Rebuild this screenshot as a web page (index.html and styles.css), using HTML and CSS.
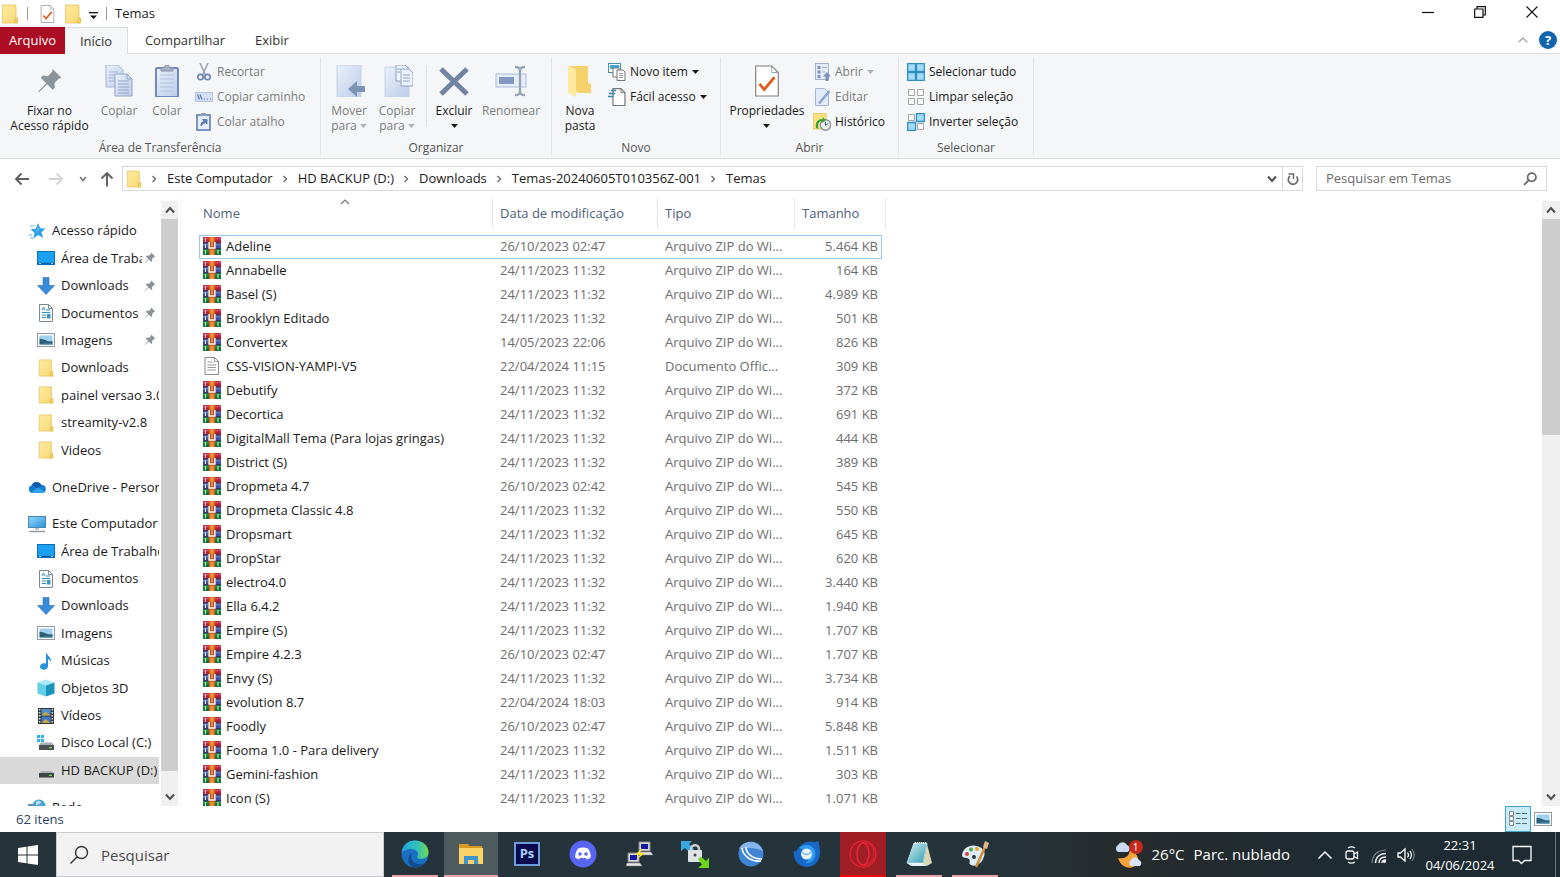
FILE: index.html
```html
<!DOCTYPE html>
<html lang="pt-BR">
<head>
  <meta charset="UTF-8" />
  <meta name="viewport" content="width=device-width, initial-scale=1.0" />
  <title>Temas</title>
  <link rel="stylesheet" href="styles.css">
</head>
<body>
  <svg class="sprite" aria-hidden="true">
    <defs>
      <linearGradient id="gFolder" x1="0" y1="0" x2="1" y2="1"><stop offset="0" stop-color="#ffeaa0" /><stop offset="1" stop-color="#f6d873" /></linearGradient>
      <linearGradient id="gPaper" x1="0" y1="0" x2="1" y2="1"><stop offset="0" stop-color="#e9f0fb" /><stop offset="1" stop-color="#bccde8" /></linearGradient>
      <linearGradient id="gScreen" x1="0" y1="0" x2="1" y2="1"><stop offset="0" stop-color="#8fd6fb" /><stop offset="1" stop-color="#2b93dd" /></linearGradient>
      <linearGradient id="gEdge" x1="0" y1="0" x2="1" y2="0"><stop offset="0" stop-color="#1fa6e0" /><stop offset=".6" stop-color="#35c1b8" /><stop offset="1" stop-color="#6fdc4d" /></linearGradient>
      <linearGradient id="gGlass" x1="0" y1="0" x2="1" y2="1"><stop offset="0" stop-color="#d3f1f5" /><stop offset="1" stop-color="#2f9bb0" /></linearGradient>
    </defs>
    <symbol id="folder" viewBox="0 0 18 20">
      <path d="M1.500 1h13.500v13h1.500v5h-15z" fill="url(#gFolder)" stroke="#e5c25a" stroke-width=".8" />
      <path d="M13.500 19v-4l1.500-1.500 1.500 1.500v4z" fill="#f3cf62" stroke="#dfb84c" stroke-width=".6" />
    </symbol>
    <symbol id="rar" viewBox="0 0 18 18">
      <rect y="0" width="18" height="6" fill="#b3213f" /><rect y="0.500" width="18" height="2" fill="#d5435b" />
      <rect y="6" width="18" height="6" fill="#3f4fa5" /><rect y="6.500" width="18" height="2" fill="#6b72c4" />
      <rect y="12" width="18" height="6" fill="#0f7236" /><rect y="12.500" width="18" height="2" fill="#2c9a4d" />
      <path d="M2.500 1v4M2.500 7v4M2.500 13v4M15 13v4" stroke="#d9e6c8" stroke-width="1" />
      <path d="M0 5.800h18M0 11.800h18" stroke="#2b2440" stroke-width=".8" />
      <rect x="6" width="6" height="18" fill="#d9631b" /><rect x="7.500" width="3" height="18" fill="#f0913c" />
      <path d="M5 5h8v7.500H5z" fill="#a3431f" />
      <path d="M6.200 5v6h5.600V5" fill="none" stroke="#fff" stroke-width="1.500" />
      <path d="M9 5v4.500" stroke="#f2a65c" stroke-width="1.600" />
    </symbol>
    <symbol id="textfile" viewBox="0 0 18 18">
      <path d="M2 .5h9.500l4 4v13H2z" fill="#fff" stroke="#8a8a8a" />
      <path d="M11.500.5v4h4M4.500 5h5M4.500 8h8.500M4.500 10.500h8.500M4.500 13h8.500" fill="none" stroke="#999" />
    </symbol>
    <symbol id="pin" viewBox="0 0 24 24">
      <path d="M14.500 1l8 8-2.500 1-4 4 .5 4-2 2-5-5L1.500 22.500 1 22l7.500-8-5-5 2-2 4.500.500 4-4z" fill="#8b949a" />
    </symbol>
    <symbol id="star" viewBox="0 0 18 18">
      <path d="M10 1l2.200 5.200 5.300.3-4 3.700 1.600 5.800-5-3-4.600 3.500 1-5.800-4-3.500 5.300-.5z" fill="#2f9fe3" />
      <path d="M2 4h4M1 13h3M2 16h3" stroke="#8cd0f5" stroke-width="1.500" />
      <path d="M10 4l1.500 3.500-4 4z" fill="#56b6ef" />
    </symbol>
    <symbol id="desktop" viewBox="0 0 18 18">
      <rect x=".5" y="2.500" width="17" height="13" fill="#1ba1f2" stroke="#0b6fbd" />
      <path d="M1 14.500h16" stroke="#0a5ea6" stroke-width="1.500" /><path d="M2 14.500h2M14 14.500h2" stroke="#9bd9ff" />
    </symbol>
    <symbol id="down" viewBox="0 0 18 18"><path d="M6 0.500h6v8h5.500L9 17.500.5 8.500H6z" fill="#378bd8" stroke="#2a74bb" stroke-width=".6" /></symbol>
    <symbol id="doc" viewBox="0 0 18 18">
      <path d="M2.500.5h9l4 4v13h-13z" fill="#fafcfd" stroke="#7e8a93" /><path d="M11.500.5v4h4" fill="none" stroke="#7e8a93" />
      <path d="M5 6l1.500-3L8 6M9 6h4M5 8.500h8M5 11h4M5 13.500h4" fill="none" stroke="#2d8fb8" /><rect x="10" y="10" width="3.500" height="4.500" fill="#3e94c2" />
    </symbol>
    <symbol id="image" viewBox="0 0 18 18">
      <rect x=".5" y="2.500" width="17" height="13" fill="#fff" stroke="#929ba3" /><rect x="2.500" y="4.500" width="13" height="9" fill="#9ed0ef" />
      <path d="M2.500 8c4-1 8 4 13 2v3.500h-13z" fill="#2f6078" /><path d="M7 12.500h8.500v1H6z" fill="#4d9ac0" />
    </symbol>
    <symbol id="cloud" viewBox="0 0 18 18">
      <path d="M4.500 15a4 4 0 0 1-.8-7.800A5.500 5.500 0 0 1 13.500 7 4 4 0 0 1 14 15z" fill="#1478cf" /><path d="M3.800 7.200A5.500 5.500 0 0 1 13.500 7L9 10z" fill="#0d57a5" /><path d="M3 14.500l7-5 7 4a4 4 0 0 1-3 1.500H4.500z" fill="#2ba4ec" />
    </symbol>
    <symbol id="pc" viewBox="0 0 18 18">
      <rect x=".5" y="1.500" width="17" height="11" fill="url(#gScreen)" stroke="#4b87ad" /><path d="M7 13h4v2H7z" fill="#b9c3ca" /><path d="M1 16.500h16" stroke="#8d989f" stroke-width="1.400" />
    </symbol>
    <symbol id="music" viewBox="0 0 18 18"><path d="M9 0c1 4 5.500 4.500 5 10.500C13.500 8.500 12.500 7.500 11 7v7c0 5-8 5-8 .8C3 12 6 10.500 9 11.500z" fill="#2592dd" /></symbol>
    <symbol id="cube" viewBox="0 0 18 18"><path d="M9 .5l8.500 3-8.500 3-8.500-3z" fill="#a7e9f4" /><path d="M.5 3.500l8.500 3v11l-8.500-3z" fill="#5fd0e6" /><path d="M17.500 3.500l-8.500 3v11l8.500-3z" fill="#1c93bb" /></symbol>
    <symbol id="film" viewBox="0 0 18 18">
      <rect x="1" y="1" width="16" height="16" fill="#33383d" /><rect x="4.500" y="2" width="9" height="6.500" fill="#4e8fd0" /><rect x="4.500" y="9.500" width="9" height="6.500" fill="#4577c9" />
      <path d="M4.500 8.500l4-4 5 4zM4.500 16l4-4 5 4z" fill="#c5a542" /><path d="M2.700 2v15M15.300 2v15" stroke="#e5e5e5" stroke-width="1.500" stroke-dasharray="1.500 1.500" />
    </symbol>
    <symbol id="drive" viewBox="0 0 18 18"><path d="M4 10h11l2 3H2z" fill="#a9afb3" /><rect x="2" y="12" width="15" height="4.500" fill="#3c4246" /><path d="M12 14.300h3" stroke="#6be04e" stroke-width="1.300" /></symbol>
    <symbol id="windrive" viewBox="0 0 18 18"><path d="M4 8.500h11l2 3H2z" fill="#a9afb3" /><rect x="2" y="11" width="15" height="5" fill="#4a5054" /><path d="M12 13.600h3" stroke="#6be04e" stroke-width="1.300" /><path d="M0 1h3v3H0zM4 1h3v3H4zM0 5h3v3H0zM4 5h3v3H4z" fill="#27b3e6" /></symbol>
    <symbol id="net" viewBox="0 0 18 18"><circle cx="11" cy="8" r="6.500" fill="#4aa0d3" /><path d="M8 4c2-2 4-1 5 0s-3 3-5 3z" fill="#b8e1f5" /><path d="M0 6h5l3 2v8H0z" fill="#5e93b6" /></symbol>
    <symbol id="check" viewBox="0 0 26 34">
      <path d="M1 1h17l7 7v25H1z" fill="#fff" stroke="#7d7d7d" stroke-width="1.200" /><path d="M18 1v7h7" fill="none" stroke="#9a9a9a" /><path d="M5 20l5 6 11-13" fill="none" stroke="#dd5f22" stroke-width="3" />
    </symbol>
    <symbol id="chev" viewBox="0 0 8 8"><path d="M2.500 1l3 3-3 3" fill="none" stroke="#6d6d6d" stroke-width="1.400" /></symbol>
    <symbol id="cup" viewBox="0 0 12 12"><path d="M2 8.500l4-4.500 4 4.500" fill="none" stroke="#505050" stroke-width="2" /></symbol>
    <symbol id="cdown" viewBox="0 0 12 12"><path d="M2 3.500L6 8l4-4.500" fill="none" stroke="#505050" stroke-width="2" /></symbol>
    <symbol id="tri" viewBox="0 0 7 4"><path d="M0 0h7L3.500 4z" fill="currentColor" /></symbol>
    <symbol id="lens" viewBox="0 0 20 20"><circle cx="12.500" cy="7.500" r="6" fill="none" stroke="currentColor" stroke-width="var(--w)" /><path d="M8.200 11.800L1.500 18.500" stroke="currentColor" stroke-width="var(--w)" /></symbol>
  </svg>

  <header class="titlebar">
    <svg class="i-folder"><use href="#folder" /></svg>
    <span class="bar"></span>
    <svg class="i-check"><use href="#check" /></svg>
    <svg class="i-folder"><use href="#folder" /></svg>
    <svg class="i-more" viewBox="0 0 9 8"><path d="M0 .7h9" stroke="#111" stroke-width="1.300" /><path d="M1 3.500h7L4.500 7z" fill="#111" /></svg>
    <span class="bar"></span>
    <h1>Temas</h1>
    <div class="window-buttons">
      <button aria-label="Minimizar"><svg viewBox="0 0 12 12"><path d="M0 6.500h12" stroke="#111" stroke-width="1.200" /></svg></button>
      <button aria-label="Restaurar"><svg viewBox="0 0 12 12"><path d="M.7 3h8.300v8.300H.7zM3 3V.7h8.300V9H9" fill="none" stroke="#111" stroke-width="1.200" /></svg></button>
      <button aria-label="Fechar"><svg viewBox="0 0 12 12"><path d="M.5.5l11 11M11.500.5l-11 11" stroke="#111" stroke-width="1.100" /></svg></button>
    </div>
  </header>

  <nav class="tabs">
    <button class="tab file">Arquivo</button>
    <button class="tab active">Início</button>
    <button class="tab share">Compartilhar</button>
    <button class="tab view">Exibir</button>
    <div class="tabs-right">
      <svg class="i-collapse" viewBox="0 0 10 6"><path d="M.7 5.300L5 1l4.300 4.300" fill="none" stroke="#a5a5a5" stroke-width="1.300" /></svg>
      <button class="help" aria-label="Ajuda">?</button>
    </div>
  </nav>

  <section class="ribbon">
    <div class="group g-clip">
      <div class="tools">
        <button class="big wide"><svg><use href="#pin" /></svg><span>Fixar no<br>Acesso rápido</span></button>
        <button class="big" disabled><svg viewBox="0 0 32 32"><path d="M3 0h12l5 5v17H3z" fill="url(#gPaper)" stroke="#a4b5d3" /><path d="M6 7h9M6 10h9M6 13h9M6 16h9" stroke="#a4b5d3" /><path d="M12 9h12l5 5v17H12z" fill="url(#gPaper)" stroke="#8ea3c6" /><path d="M24 9v5h5M15 16h11M15 19h11M15 22h11M15 25h11M15 28h11" fill="none" stroke="#8ea3c6" /></svg><span>Copiar</span></button>
        <button class="big" disabled><svg viewBox="0 0 32 32"><rect x="5" y="3" width="22" height="29" rx="1" fill="url(#gPaper)" stroke="#6f8abb" stroke-width="2" /><path d="M9 10h14M9 14h14M9 18h14M9 22h14M9 26h14" stroke="#b1c3e2" /><path d="M10 6V3h3c0-4 6-4 6 0h3v3z" fill="#a5b2c4" stroke="#8794a8" /></svg><span>Colar</span></button>
        <div class="list">
          <button disabled><svg viewBox="0 0 18 18"><path d="M5 0l5.500 12M13 0L7.500 12" stroke="#99a4b4" stroke-width="1.600" /><circle cx="5.500" cy="14" r="2.700" fill="none" stroke="#6f86b5" stroke-width="1.700" /><circle cx="12.500" cy="14" r="2.700" fill="none" stroke="#6f86b5" stroke-width="1.700" /></svg>Recortar</button>
          <button disabled><svg viewBox="0 0 18 18"><rect x=".5" y="4.500" width="17" height="9" fill="#d4e0f4" stroke="#b4c6e4" /><path d="M2.500 6.500l2 5M5 6.500l2 5M9 11h1M12 11h1M15 11h1" stroke="#5c74a5" stroke-width="1.200" /></svg>Copiar caminho</button>
          <button disabled><svg viewBox="0 0 18 18"><rect x="2" y="2" width="13" height="15" fill="#e5edf9" stroke="#6f8abb" stroke-width="1.800" /><path d="M6 0h5v3H6z" fill="#8f9fb9" /><path d="M6 13c0-3 1-4 3-5L7.500 6.500H12V11l-1.500-1.500C8.500 10 8 11 6 13z" fill="#5c7cb8" stroke="#5c7cb8" /></svg>Colar atalho</button>
        </div>
      </div>
      <h2>Área de Transferência</h2>
    </div>
    <div class="group g-org">
      <div class="tools">
        <button class="big" disabled><svg viewBox="0 0 32 32"><path d="M4 0h24v32H4z" fill="url(#gPaper)" stroke="#c3d0e6" /><path d="M15 24l9-8v5h9v6h-9v5z" fill="#7c93b8" /></svg><span>Mover<br>para <svg class="tri"><use href="#tri" /></svg></span></button>
        <button class="big" disabled><svg viewBox="0 0 32 32"><path d="M4 2h24v30H4z" fill="url(#gPaper)" stroke="#c3d0e6" /><path d="M15 0h9l4 4v12H15z" fill="#edf3fc" stroke="#8ea3c6" /><path d="M20 4h8l4 4v13H20z" fill="#edf3fc" stroke="#8ea3c6" /><path d="M22 10h7M22 13h7M22 16h7M16 4h4M16 7h3" stroke="#8ea3c6" /></svg><span>Copiar<br>para <svg class="tri"><use href="#tri" /></svg></span></button>
        <span class="divider"></span>
        <button class="big"><svg viewBox="0 0 32 32"><path d="M3 4l26 25M29 4L3 29" stroke="#7184a3" stroke-width="5" /></svg><span>Excluir<br><svg class="tri"><use href="#tri" /></svg></span></button>
        <button class="big rename" disabled><svg viewBox="0 0 32 32"><rect x="1" y="9" width="30" height="13" fill="#e6eefa" stroke="#a9bbdb" /><rect x="4" y="12" width="15" height="7" fill="#8499c0" /><path d="M20 2c4 0 5 1 5 4v20c0 3-1 4-5 4M30 2c-4 0-5 1-5 4M30 30c-4 0-5-1-5-4" fill="none" stroke="#98a6bb" stroke-width="2.500" /></svg><span>Renomear</span></button>
      </div>
      <h2>Organizar</h2>
    </div>
    <div class="group g-new">
      <div class="tools">
        <button class="big"><svg viewBox="0 0 32 32"><path d="M6 1h18v17l3 1v9H13z" fill="#f5d26b" /><path d="M4 1l8 3v28l-8-4z" fill="#ffe9a0" /></svg><span>Nova<br>pasta</span></button>
        <div class="list">
          <button><svg viewBox="0 0 18 18"><rect x=".5" y=".5" width="12" height="9" fill="#fff" stroke="#4a8fad" /><rect x="2" y="2" width="9" height="4" fill="#45a6d8" /><path d="M5 5h6v9H5z" fill="#fff" stroke="#777" /><path d="M9 7h6l2 2v8.500H9z" fill="#fff" stroke="#777" /><path d="M11 10.500h4M11 12.500h4M11 14.500h4" stroke="#999" /></svg>Novo item <svg class="tri"><use href="#tri" /></svg></button>
          <button><svg viewBox="0 0 18 18"><path d="M5 .7h8l4 4v12.800H5z" fill="#fff" stroke="#777" stroke-width="1.200" /><path d="M13 .7v4h4" fill="none" stroke="#777" /><path d="M3 2.500h5M1 5.500h6M0 8.500h5" stroke="#2889a8" stroke-width="1.600" /></svg>Fácil acesso <svg class="tri"><use href="#tri" /></svg></button>
        </div>
      </div>
      <h2>Novo</h2>
    </div>
    <div class="group g-open">
      <div class="tools">
        <button class="big wide"><svg><use href="#check" /></svg><span>Propriedades<br><svg class="tri"><use href="#tri" /></svg></span></button>
        <div class="list">
          <button disabled><svg viewBox="0 0 18 18"><rect x="2.500" y=".5" width="13" height="16" fill="#e3ebf8" stroke="#a3b4d2" /><path d="M4.500 3h3v3h-3zM4.500 7.500h3v3h-3zM4.500 12h3v3h-3z" fill="#7f94bb" /><path d="M9 4.500h5M9 9h3" stroke="#a3b4d2" /><path d="M14 9l4 4.500h-2.500V18h-3v-4.500H10z" fill="#7c93b8" /></svg>Abrir <svg class="tri"><use href="#tri" /></svg></button>
          <button disabled><svg viewBox="0 0 18 18"><path d="M2.500.5h9l4 4v13h-13z" fill="#e3ebf8" stroke="#a3b4d2" /><path d="M16.500 3L6 15.500" stroke="#8ba3cf" stroke-width="2.500" /></svg>Editar</button>
          <button><svg viewBox="0 0 18 18"><path d="M0 0h13v16H0z" fill="#f7df84" stroke="#e2c55f" /><circle cx="12.500" cy="12" r="5.200" fill="#e9ecef" stroke="#8a9298" stroke-width="1.400" /><path d="M12.500 9v3.500l2.500-2" fill="none" stroke="#555" /><path d="M3 15c-1-6 2-9 7-9l-1-2 4 3-4 3v-2c-3 0-5 3-3.500 8z" fill="#36a136" /></svg>Histórico</button>
        </div>
      </div>
      <h2>Abrir</h2>
    </div>
    <div class="group g-select">
      <div class="tools">
        <div class="list">
          <button><svg viewBox="0 0 18 18"><path d="M.7.7h7.800v7.800H.7zM9.500.7h7.800v7.800H9.500zM.7 9.500h7.800v7.800H.7zM9.500 9.500h7.800v7.800H9.500z" fill="#a3dcf8" stroke="#2e8fc0" stroke-width="1.300" /></svg>Selecionar tudo</button>
          <button><svg viewBox="0 0 18 18"><path d="M1.500 1.500h6v6h-6zM10.500 1.500h6v6h-6zM1.500 10.500h6v6h-6zM10.500 10.500h6v6h-6z" fill="#fff" stroke="#a3a3a3" /></svg>Limpar seleção</button>
          <button><svg viewBox="0 0 18 18"><path d="M1.500 1.500h6v6h-6zM10.500 10.500h6v6h-6z" fill="#fff" stroke="#a3a3a3" /><path d="M9.500.7h7.800v7.800H9.500zM.7 9.500h7.800v7.800H.7z" fill="#a3dcf8" stroke="#2e8fc0" stroke-width="1.300" /></svg>Inverter seleção</button>
        </div>
      </div>
      <h2>Selecionar</h2>
    </div>
  </section>

  <div class="address-row">
    <div class="nav-buttons">
      <button aria-label="Voltar"><svg viewBox="0 0 16 16"><path d="M15 8H2M7.500 2.500L2 8l5.500 5.500" fill="none" stroke="#5f5f5f" stroke-width="1.900" /></svg></button>
      <button aria-label="Avançar" disabled><svg viewBox="0 0 16 16"><path d="M1 8h13M8.500 2.500L14 8l-5.500 5.500" fill="none" stroke="#d4d4d4" stroke-width="1.900" /></svg></button>
      <button class="recent" aria-label="Recentes"><svg viewBox="0 0 8 8"><path d="M1 2l3 3.500L7 2" fill="none" stroke="#777" stroke-width="1.600" /></svg></button>
      <button class="up" aria-label="Acima"><svg viewBox="0 0 16 16"><path d="M8 15.500V2M2.500 7.500L8 2l5.500 5.500" fill="none" stroke="#5f5f5f" stroke-width="1.900" /></svg></button>
    </div>
    <div class="address">
      <svg class="i-folder"><use href="#folder" /></svg>
      <ol class="crumbs">
        <li><svg><use href="#chev" /></svg><a href="#">Este Computador</a></li>
        <li><svg><use href="#chev" /></svg><a href="#">HD BACKUP (D:)</a></li>
        <li><svg><use href="#chev" /></svg><a href="#">Downloads</a></li>
        <li><svg><use href="#chev" /></svg><a href="#">Temas-20240605T010356Z-001</a></li>
        <li><svg><use href="#chev" /></svg><a href="#">Temas</a></li>
      </ol>
      <button class="history" aria-label="Locais anteriores"><svg><use href="#cdown" /></svg></button>
      <button class="refresh" aria-label="Atualizar"><svg viewBox="0 0 14 14"><path d="M4 4a4.700 4.700 0 1 0 6.500.5" fill="none" stroke="#6a6a6a" stroke-width="1.700" /><path d="M2.500 2h5v5" fill="none" stroke="#6a6a6a" stroke-width="1.500" /></svg></button>
    </div>
    <div class="search">
      <input type="text" placeholder="Pesquisar em Temas" aria-label="Pesquisar em Temas">
      <svg><use href="#lens" /></svg>
    </div>
  </div>

  <main>
    <nav class="sidebar">
      <div class="tree">
        <div class="branch quick">
          <a class="root" href="#"><svg><use href="#star" /></svg><span>Acesso rápido</span></a>
          <a class="pinned" href="#"><svg><use href="#desktop" /></svg><span>Área de Trabalho</span><svg class="i-pin"><use href="#pin" /></svg></a>
          <a class="pinned" href="#"><svg><use href="#down" /></svg><span>Downloads</span><svg class="i-pin"><use href="#pin" /></svg></a>
          <a class="pinned" href="#"><svg><use href="#doc" /></svg><span>Documentos</span><svg class="i-pin"><use href="#pin" /></svg></a>
          <a class="pinned" href="#"><svg><use href="#image" /></svg><span>Imagens</span><svg class="i-pin"><use href="#pin" /></svg></a>
          <a href="#"><svg><use href="#folder" /></svg><span>Downloads</span></a>
          <a href="#"><svg><use href="#folder" /></svg><span>painel versao 3.0</span></a>
          <a href="#"><svg><use href="#folder" /></svg><span>streamity-v2.8</span></a>
          <a href="#"><svg><use href="#folder" /></svg><span>Videos</span></a>
        </div>
        <div class="branch single">
          <a class="root" href="#"><svg><use href="#cloud" /></svg><span>OneDrive - Personal</span></a>
        </div>
        <div class="branch computer">
          <a class="root" href="#"><svg><use href="#pc" /></svg><span>Este Computador</span></a>
          <a href="#"><svg><use href="#desktop" /></svg><span>Área de Trabalho</span></a>
          <a href="#"><svg><use href="#doc" /></svg><span>Documentos</span></a>
          <a href="#"><svg><use href="#down" /></svg><span>Downloads</span></a>
          <a href="#"><svg><use href="#image" /></svg><span>Imagens</span></a>
          <a href="#"><svg><use href="#music" /></svg><span>Músicas</span></a>
          <a href="#"><svg><use href="#cube" /></svg><span>Objetos 3D</span></a>
          <a href="#"><svg><use href="#film" /></svg><span>Vídeos</span></a>
          <a href="#"><svg><use href="#windrive" /></svg><span>Disco Local (C:)</span></a>
          <a class="current" href="#"><svg><use href="#drive" /></svg><span>HD BACKUP (D:)</span></a>
        </div>
        <div class="branch single">
          <a class="root" href="#"><svg><use href="#net" /></svg><span>Rede</span></a>
        </div>
      </div>
      <div class="scrollbar side-scroll"><svg><use href="#cup" /></svg><div class="track"><div class="thumb"></div></div><svg><use href="#cdown" /></svg></div>
    </nav>

    <div class="files">
      <table>
        <colgroup><col class="c-name"><col class="c-date"><col class="c-type"><col class="c-size"><col class="c-end"></colgroup>
        <thead>
          <tr><th>Nome<svg class="sort" viewBox="0 0 10 6"><path d="M1 5l4-4 4 4" fill="none" stroke="#777" stroke-width="1.200" /></svg></th><th>Data de modificação</th><th>Tipo</th><th colspan="2">Tamanho</th></tr>
        </thead>
        <tbody>
          <tr class="focus"><td><svg><use href="#rar" /></svg>Adeline</td><td>26/10/2023 02:47</td><td>Arquivo ZIP do Wi...</td><td>5.464 KB</td><td></td></tr>
          <tr><td><svg><use href="#rar" /></svg>Annabelle</td><td>24/11/2023 11:32</td><td>Arquivo ZIP do Wi...</td><td>164 KB</td><td></td></tr>
          <tr><td><svg><use href="#rar" /></svg>Basel (S)</td><td>24/11/2023 11:32</td><td>Arquivo ZIP do Wi...</td><td>4.989 KB</td><td></td></tr>
          <tr><td><svg><use href="#rar" /></svg>Brooklyn Editado</td><td>24/11/2023 11:32</td><td>Arquivo ZIP do Wi...</td><td>501 KB</td><td></td></tr>
          <tr><td><svg><use href="#rar" /></svg>Convertex</td><td>14/05/2023 22:06</td><td>Arquivo ZIP do Wi...</td><td>826 KB</td><td></td></tr>
          <tr><td><svg><use href="#textfile" /></svg>CSS-VISION-YAMPI-V5</td><td>22/04/2024 11:15</td><td>Documento Offic...</td><td>309 KB</td><td></td></tr>
          <tr><td><svg><use href="#rar" /></svg>Debutify</td><td>24/11/2023 11:32</td><td>Arquivo ZIP do Wi...</td><td>372 KB</td><td></td></tr>
          <tr><td><svg><use href="#rar" /></svg>Decortica</td><td>24/11/2023 11:32</td><td>Arquivo ZIP do Wi...</td><td>691 KB</td><td></td></tr>
          <tr><td><svg><use href="#rar" /></svg>DigitalMall Tema (Para lojas gringas)</td><td>24/11/2023 11:32</td><td>Arquivo ZIP do Wi...</td><td>444 KB</td><td></td></tr>
          <tr><td><svg><use href="#rar" /></svg>District (S)</td><td>24/11/2023 11:32</td><td>Arquivo ZIP do Wi...</td><td>389 KB</td><td></td></tr>
          <tr><td><svg><use href="#rar" /></svg>Dropmeta 4.7</td><td>26/10/2023 02:42</td><td>Arquivo ZIP do Wi...</td><td>545 KB</td><td></td></tr>
          <tr><td><svg><use href="#rar" /></svg>Dropmeta Classic 4.8</td><td>24/11/2023 11:32</td><td>Arquivo ZIP do Wi...</td><td>550 KB</td><td></td></tr>
          <tr><td><svg><use href="#rar" /></svg>Dropsmart</td><td>24/11/2023 11:32</td><td>Arquivo ZIP do Wi...</td><td>645 KB</td><td></td></tr>
          <tr><td><svg><use href="#rar" /></svg>DropStar</td><td>24/11/2023 11:32</td><td>Arquivo ZIP do Wi...</td><td>620 KB</td><td></td></tr>
          <tr><td><svg><use href="#rar" /></svg>electro4.0</td><td>24/11/2023 11:32</td><td>Arquivo ZIP do Wi...</td><td>3.440 KB</td><td></td></tr>
          <tr><td><svg><use href="#rar" /></svg>Ella 6.4.2</td><td>24/11/2023 11:32</td><td>Arquivo ZIP do Wi...</td><td>1.940 KB</td><td></td></tr>
          <tr><td><svg><use href="#rar" /></svg>Empire (S)</td><td>24/11/2023 11:32</td><td>Arquivo ZIP do Wi...</td><td>1.707 KB</td><td></td></tr>
          <tr><td><svg><use href="#rar" /></svg>Empire 4.2.3</td><td>26/10/2023 02:47</td><td>Arquivo ZIP do Wi...</td><td>1.707 KB</td><td></td></tr>
          <tr><td><svg><use href="#rar" /></svg>Envy (S)</td><td>24/11/2023 11:32</td><td>Arquivo ZIP do Wi...</td><td>3.734 KB</td><td></td></tr>
          <tr><td><svg><use href="#rar" /></svg>evolution 8.7</td><td>22/04/2024 18:03</td><td>Arquivo ZIP do Wi...</td><td>914 KB</td><td></td></tr>
          <tr><td><svg><use href="#rar" /></svg>Foodly</td><td>26/10/2023 02:47</td><td>Arquivo ZIP do Wi...</td><td>5.848 KB</td><td></td></tr>
          <tr><td><svg><use href="#rar" /></svg>Fooma 1.0 - Para delivery</td><td>24/11/2023 11:32</td><td>Arquivo ZIP do Wi...</td><td>1.511 KB</td><td></td></tr>
          <tr><td><svg><use href="#rar" /></svg>Gemini-fashion</td><td>24/11/2023 11:32</td><td>Arquivo ZIP do Wi...</td><td>303 KB</td><td></td></tr>
          <tr><td><svg><use href="#rar" /></svg>Icon (S)</td><td>24/11/2023 11:32</td><td>Arquivo ZIP do Wi...</td><td>1.071 KB</td><td></td></tr>
        </tbody>
      </table>
    </div>
    <div class="scrollbar file-scroll"><svg><use href="#cup" /></svg><div class="track"><div class="thumb"></div></div><svg><use href="#cdown" /></svg></div>
  </main>

  <footer class="status">
    <span>62 itens</span>
    <div class="views">
      <button class="on" aria-label="Detalhes"><svg viewBox="0 0 18 18"><path d="M.5 1.500h4v4h-4zM.5 6.500h4v4h-4zM.5 11.500h4v4h-4z" fill="#fff" stroke="#888" /><path d="M7 3.500h4.500M13 3.500h5M7 8.500h4.500M13 8.500h5M7 13.500h4.500M13 13.500h5" stroke="#5c6d78" stroke-width="1.200" /></svg></button>
      <button aria-label="Miniaturas"><svg><use href="#image" /></svg></button>
    </div>
  </footer>

  <div class="taskbar">
    <button class="start" aria-label="Iniciar"><svg viewBox="0 0 20 20"><path d="M0 3l8.500-1.200v7.700H0zM9.500 1.600L20 0v9.500H9.500zM0 10.500h8.500v7.700L0 17zM9.500 10.500H20V20l-10.500-1.600z" fill="#fff" /></svg></button>
    <label class="task-search"><svg><use href="#lens" /></svg><input type="text" placeholder="Pesquisar" aria-label="Pesquisar"></label>
    <div class="apps">
      <button class="running" aria-label="Edge"><svg viewBox="0 0 28 28"><circle cx="14" cy="14" r="13.500" fill="#1b6fc0" /><path d="M.5 13C1.500 5 7 .5 14 .5c8 0 13.500 5.500 13.500 11.500 0 5-4 7-7.500 7-3 0-4.500-1.500-3.500-3 2-3-1-7-6-7-4 0-8 1.500-10 4z" fill="url(#gEdge)" /><path d="M11 13c-3 6 2 12 9 11 2 0 4-1 5-2-3 5-9 6-13 5C6 25 6 16 11 13z" fill="#134b91" /></svg></button>
      <button class="running active" aria-label="Explorador"><svg viewBox="0 0 28 28"><path d="M2 4h9l2 2h12v5H2z" fill="#d99a23" /><path d="M2 8h24v16H2z" fill="#fbd366" /><path d="M7 24v-8h14v8h-4v-4h-6v4z" fill="#3f95c9" /></svg></button>
      <button aria-label="Photoshop"><span class="ps">Ps</span></button>
      <button aria-label="Discord"><svg viewBox="0 0 28 28"><circle cx="14" cy="14" r="13.500" fill="#5865f2" /><path d="M9 8.500c3-1.300 7-1.300 10 0 2 3 3 6 2.800 9-1.300 1-2.500 1.700-4 2l-1-1.700c-2 .5-3.600.5-5.600 0l-1 1.700c-1.500-.3-2.700-1-4-2C6 14.500 7 11.500 9 8.500z" fill="#fff" /><circle cx="11" cy="14" r="1.800" fill="#5865f2" /><circle cx="17" cy="14" r="1.800" fill="#5865f2" /></svg></button>
      <button aria-label="PuTTY"><svg viewBox="0 0 28 28"><path d="M14 2h11v9H14zM3 13h11v9H3z" fill="#d8d8d8" stroke="#888" /><path d="M16 4h7v5h-7zM5 15h7v5H5z" fill="#1517a8" /><path d="M13 12h13l2 3H13zM2 23h13l2 3H1z" fill="#e8e8e8" stroke="#777" stroke-width=".6" /><path d="M17 8l-7 7h5l-4 5 9-7h-5z" fill="#fbe82c" /></svg></button>
      <button aria-label="WinSCP"><svg viewBox="0 0 28 28"><path d="M0 1h11L8 4l5 5-4 4-5-5-4 3z" fill="#37a7dd" /><path d="M10 11V9c0-5 8-5 8 0v2" fill="none" stroke="#c8cdd2" stroke-width="2.500" /><rect x="7" y="10" width="14" height="12" rx="1" fill="#dfe3e6" /><circle cx="14" cy="15" r="1.500" fill="#444" /><path d="M28 28H17l4-3.500-4-5 3-3 5 4.500 3-3.500z" fill="#6fd61e" /></svg></button>
      <button aria-label="Conexão"><svg viewBox="0 0 28 28"><circle cx="14" cy="14" r="12.500" fill="#3f85d6" /><path d="M2 9C6 0 21-1 26 11c-6-3-15-4-24-2z" fill="#86b6ec" /><path d="M5 8c1 8 9 14 19 13M9 7c0 7 7 12 16 12" fill="none" stroke="#fff" stroke-width="1.600" /></svg></button>
      <button aria-label="Thunderbird"><svg viewBox="0 0 28 28"><path d="M1 10c1 2 2 2 3 0C8 3 15 0 22 2l4-1c-1 2 1 5 1 12 0 8-6 14-13 14S-1 21 1 10z" fill="#1768c8" /><path d="M6 8c5-5 14-4 16 3 2 8-4 13-10 12 7-3 7-12-6-15z" fill="#2f9bf1" /><circle cx="13.500" cy="14" r="5.500" fill="#e9f4fe" /><path d="M9 11.500c2 4 7 4 9 0" fill="none" stroke="#7cb6ec" stroke-width="1.300" /></svg></button>
      <button class="opera" aria-label="Opera"><svg viewBox="0 0 28 28"><circle cx="14" cy="14" r="13" fill="none" stroke="#f02338" stroke-width="1.200" /><ellipse cx="14" cy="14" rx="6" ry="11" fill="none" stroke="#f02338" stroke-width="1.500" /><path d="M14 3c9 0 11 5 11 11s-4 11-11 11" fill="none" stroke="#f02338" /></svg></button>
      <button class="running" aria-label="Bloco de notas"><svg viewBox="0 0 28 28"><path d="M22 4l5 19-5 3-4-2z" fill="#d8d5b4" /><path d="M9 3h13l-4 20H2z" fill="url(#gGlass)" stroke="#b3dae0" /><path d="M2 23h16l4 3H6z" fill="#e8f2f2" /><path d="M10 3h12" stroke="#e7e7e7" stroke-width="2" stroke-dasharray="1 1" /></svg></button>
      <button class="running" aria-label="Paint"><svg viewBox="0 0 28 28"><path d="M1 15C2 8 9 4 16 6c8 2 9 8 6 13-2 5-8 8-12 6-3-1 0-4-2-6S1 19 1 15z" fill="#dcebf5" /><circle cx="6" cy="14" r="2" fill="#d24b3a" /><circle cx="10" cy="9.500" r="2" fill="#54a846" /><circle cx="16" cy="9" r="2" fill="#eaa72b" /><circle cx="13" cy="17" r="2" fill="#263840" /><path d="M15 27L24 7" stroke="#d08b35" stroke-width="2.500" /><path d="M22 7l2-6 4 2-2 6z" fill="#e3b98a" /></svg></button>
    </div>
    <div class="tray">
      <button class="weather">
        <svg viewBox="0 0 28 28"><path d="M3 17c8 1 11-2 12-8 8 3 11 11 5 16-6 4-14 1-17-8z" fill="#f2a33a" /><path d="M3 11a4 4 0 0 1 0-7 5 5 0 0 1 9 0 4 4 0 0 1 1 7z" fill="#c9d9f3" /><path d="M16 25a3.500 3.500 0 0 1 0-6 4.500 4.500 0 0 1 8 0 3.500 3.500 0 0 1 1 6z" fill="#d7e3f7" /></svg>
        <span class="badge">1</span>
        <span>26°C</span><span>Parc. nublado</span>
      </button>
      <div class="tray-icons">
        <svg viewBox="0 0 18 18"><path d="M2.500 12.500L9 6l6.500 6.500" fill="none" stroke="#fff" stroke-width="1.500" /></svg>
        <svg viewBox="0 0 18 18"><rect x="3" y="5" width="8" height="8" rx="2" fill="none" stroke="#fff" stroke-width="1.300" /><path d="M11 8l3.500-2v6.500L11 10.500M5 2c2-1.300 5-1.300 7 0M5 16c2 1.300 5 1.300 7 0" fill="none" stroke="#fff" stroke-width="1.200" /></svg>
        <svg viewBox="0 0 18 18"><path d="M2 17C2 9 8 4 16 4" fill="none" stroke="#7c8589" stroke-width="1.200" /><path d="M5.500 17C5.500 11 10 7.500 16 7.500M9 17c0-4 3-6 7-6M12 17c0-2 1.500-3 4-3" fill="none" stroke="#fff" stroke-width="1.300" /><circle cx="14.500" cy="15.500" r="1.500" fill="#fff" /></svg>
        <svg viewBox="0 0 18 18"><path d="M1 7h2.500L8 3v12l-4.500-4H1z" fill="none" stroke="#fff" stroke-width="1.300" /><path d="M10.500 6.500q2 2.500 0 5M12.800 4.800q3.200 4.200 0 8.400" fill="none" stroke="#fff" stroke-width="1.200" /><path d="M15 3q4.500 6 0 12" fill="none" stroke="#7c8589" stroke-width="1.200" /></svg>
      </div>
      <div class="clock"><time>22:31</time><time>04/06/2024</time></div>
      <button class="notify" aria-label="Notificações"><svg viewBox="0 0 20 20"><path d="M1 1.500h18v14h-6.500L9.500 18.500l-3-3H1z" fill="none" stroke="#fff" stroke-width="1.300" /></svg></button>
    </div>
  </div>
</body>
</html>
```

FILE: styles.css
```css
:root {
  --ribbon: #f4f6f7;
  --line: #dadcdd;
  --text: #1a1a1a;
  --muted: #6d6d6d;
  --header: #4c607a;
  --disabled: #7d7d7d;
  --task: #25343a;
}

* {
  box-sizing: border-box;
}

body {
  margin: 0;
  height: 100vh;
  display: flex;
  flex-direction: column;
  overflow: hidden;
  background: #fff;
  color: var(--text);
  font-family: "Open Sans", "Noto Sans", sans-serif;
  font-size: 13px;
  line-height: 15px;
}

button,
input {
  font: inherit;
  color: inherit;
  border: 0;
  padding: 0;
  background: none;
}

h1,
h2 {
  margin: 0;
  font-size: inherit;
  font-weight: normal;
}

a {
  color: inherit;
  text-decoration: none;
}

svg {
  flex: none;
}

.sprite {
  position: absolute;
  width: 0;
  height: 0;
}

.i-folder {
  width: 18px;
  height: 20px;
}

/* title bar */
.titlebar {
  flex: none;
  height: 27px;
  display: flex;
  align-items: center;
  padding-left: 1px;
}

.titlebar .bar {
  width: 1px;
  height: 13px;
  margin: 0 12px 0 8px;
  background: #999;
}

.i-check {
  width: 15px;
  height: 18px;
  margin-right: 9px;
}

.i-more {
  width: 9px;
  height: 8px;
  margin: 4px 0 0 7px;
}

.titlebar h1 {
  margin-left: -4px;
}

.window-buttons {
  margin-left: auto;
  display: flex;
}

.window-buttons button {
  width: 52px;
  height: 27px;
}

.window-buttons svg {
  width: 12px;
  height: 12px;
}

.window-buttons button:last-child {
  margin-right: 2px;
}

/* ribbon tabs */
.tabs {
  flex: none;
  height: 27px;
  display: flex;
  border-bottom: 1px solid var(--line);
}

.tab {
  height: 27px;
  color: #333;
}

.tab.file {
  width: 65px;
  background: #ab0d22;
  color: #fff;
}

.tab.active {
  width: 63px;
  background: var(--ribbon);
  border: solid var(--line);
  border-width: 1px 1px 0 0;
}

.tab.share {
  width: 114px;
}

.tab.view {
  width: 60px;
}

.tabs-right {
  margin-left: auto;
  display: flex;
  align-items: center;
  gap: 11px;
  padding-right: 3px;
}

.i-collapse {
  width: 10px;
  height: 6px;
}

.help {
  width: 18px;
  height: 18px;
  border-radius: 50%;
  background: #1163ae;
  color: #fff;
  font-weight: bold;
}

/* ribbon */
.ribbon {
  flex: none;
  display: flex;
  height: 105px;
  background: var(--ribbon);
  border-bottom: 1px solid var(--line);
  font-size: 12px;
}

.group {
  display: flex;
  flex-direction: column;
  justify-content: space-between;
  margin: 3px 0;
  padding: 0 4px;
  border-right: 1px solid #e1e3e4;
}

.group h2 {
  text-align: center;
  color: #555;
}

.g-clip {
  width: 321px;
}

.g-org {
  width: 231px;
}

.g-new {
  width: 169px;
}

.g-open {
  width: 178px;
}

.g-select {
  width: 135px;
}

.tools {
  display: flex;
}

.big {
  width: 48px;
  display: flex;
  flex-direction: column;
  align-items: center;
  gap: 6px;
  padding-top: 8px;
  white-space: nowrap;
}

.big.wide {
  width: 84px;
}

.g-clip .wide {
  width: 91px;
}

.big.rename {
  width: 66px;
}

.big > svg {
  width: 32px;
  height: 32px;
}

.g-clip .wide > svg {
  width: 26px;
}

.tri {
  width: 7px;
  height: 4px;
  vertical-align: 2px;
}

.ribbon button:disabled {
  color: var(--disabled);
}

.ribbon button:disabled .tri {
  color: #b0b0b0;
}

.divider {
  width: 1px;
  height: 62px;
  margin: 8px 3px 0 5px;
  background: #dfe1e2;
}

.list {
  display: flex;
  flex-direction: column;
  padding: 2px 0 0 4px;
}

.list button {
  height: 25px;
  display: flex;
  align-items: center;
  gap: 4px;
  white-space: nowrap;
}

.list button > svg:first-child {
  width: 18px;
  height: 18px;
}

/* address bar */
.address-row {
  flex: none;
  display: flex;
  align-items: center;
  height: 39px;
  padding-right: 13px;
}

.nav-buttons {
  display: flex;
  align-items: center;
  width: 122px;
  padding-left: 14px;
}

.nav-buttons button {
  width: 34px;
  text-align: left;
  line-height: 0;
}

.nav-buttons svg {
  width: 16px;
  height: 16px;
}

.nav-buttons .recent {
  width: 17px;
  margin: 0 3px 0 -3px;
}

.nav-buttons .recent svg {
  width: 8px;
  height: 8px;
}

.nav-buttons .up {
  width: 16px;
}

.address,
.search {
  display: flex;
  align-items: center;
  height: 25px;
  border: 1px solid #d9d9d9;
}

.address {
  flex: 1;
  padding-left: 3px;
}

.address .i-folder {
  width: 16px;
}

.crumbs {
  flex: 1;
  display: flex;
  margin: 0;
  padding: 0;
  list-style: none;
}

.crumbs li {
  display: flex;
  align-items: center;
  white-space: nowrap;
}

.crumbs svg {
  width: 8px;
  height: 8px;
  margin: 0 9px 0 8px;
}

.history,
.refresh {
  width: 20px;
  height: 23px;
  line-height: 0;
}

.refresh {
  border-left: 1px solid #d9d9d9;
}

.history svg {
  width: 12px;
  height: 12px;
}

.refresh svg {
  width: 14px;
  height: 14px;
}

.search {
  width: 231px;
  margin-left: 13px;
  padding: 0 9px;
  color: #6a6a6a;
  --w: 2.6;
}

.search input {
  flex: 1;
  min-width: 0;
}

.search svg {
  width: 14px;
  height: 14px;
}

input::placeholder {
  color: #6a6a6a;
  opacity: 1;
}

/* body of the window */
main {
  flex: 1;
  min-height: 0;
  display: flex;
}

.sidebar {
  display: flex;
  width: 181px;
  border-right: 1px solid #f3f3f3;
}

.tree {
  width: 161px;
  padding-top: 19px;
  overflow: hidden;
}

.branch {
  display: flex;
  flex-direction: column;
  margin-bottom: 9px;
}

.quick {
  height: 247px;
}

.single {
  height: 28px;
}

.computer {
  height: 274px;
}

.branch a {
  flex: 1;
  display: flex;
  align-items: center;
  gap: 6px;
  width: 159px;
  padding-left: 37px;
  white-space: nowrap;
  overflow: hidden;
}

.branch a.root {
  padding-left: 28px;
}

.branch svg {
  width: 18px;
  height: 18px;
}

.branch .pinned span {
  flex: 1;
  overflow: hidden;
}

.branch .i-pin {
  width: 12px;
  height: 12px;
  margin: 0 3px 0 -4px;
}

.branch .current {
  background: #d9d9d9;
}

.scrollbar {
  width: 17px;
  margin-top: 3px;
  display: flex;
  flex-direction: column;
  align-items: center;
  background: #f0f0f0;
}

.scrollbar svg {
  width: 12px;
  height: 18px;
}

.scrollbar .track {
  flex: 1;
  width: 100%;
}

.thumb {
  height: 97%;
  background: #cdcdcd;
}

.file-scroll {
  width: 18px;
}

.file-scroll .thumb {
  height: 38%;
}

/* file table */
.files {
  flex: 1;
  padding-left: 18px;
  overflow: hidden;
}

table {
  width: 687px;
  table-layout: fixed;
  border-collapse: separate;
  border-spacing: 0;
}

.c-name {
  width: 294px;
}

.c-date {
  width: 165px;
}

.c-type {
  width: 137px;
}

.c-size {
  width: 87px;
}

.c-end {
  width: 4px;
}

th {
  position: relative;
  height: 31px;
  padding: 0 7px;
  border-right: 1px solid #e5e5e5;
  color: var(--header);
  font-weight: normal;
  text-align: left;
}

th:first-child {
  padding-left: 4px;
}

.sort {
  position: absolute;
  top: 1px;
  left: 48%;
  width: 10px;
  height: 6px;
}

tbody::before {
  content: "";
  display: block;
  height: 6px;
}

td {
  height: 24px;
  padding: 0 7px 2px;
  border: solid transparent;
  border-width: 1px 0;
  color: var(--muted);
  white-space: nowrap;
}

td:first-child {
  padding-left: 4px;
  color: var(--text);
}

td:nth-child(4) {
  padding: 0 4px 2px;
  text-align: right;
}

td:last-child {
  padding: 0;
}

td svg {
  width: 18px;
  height: 18px;
  margin-right: 5px;
  vertical-align: -4px;
}

.focus td:not(:last-child) {
  border-color: #99cbe8;
}

.focus td:first-child {
  border-left-width: 1px;
  padding-left: 3px;
}

.focus td:nth-child(4) {
  border-right-width: 1px;
  padding-right: 3px;
}

/* status bar */
.status {
  flex: none;
  display: flex;
  align-items: center;
  justify-content: space-between;
  height: 26px;
  padding: 0 8px 0 16px;
  color: #2a4262;
}

.views {
  display: flex;
  gap: 3px;
}

.views button {
  height: 26px;
  line-height: 0;
}

.views .on {
  width: 26px;
  border: 1px solid #41a5c9;
  background: #c8ebf8;
}

.views svg {
  width: 18px;
  height: 18px;
}

/* taskbar */
.taskbar {
  flex: none;
  display: flex;
  height: 45px;
  background: linear-gradient(90deg, var(--task), #25343a 64%, #272b2d 72%, #1e2b32 85%);
  color: #fff;
  font-size: 15px;
}

.start {
  width: 56px;
  line-height: 0;
}

.start svg {
  width: 20px;
  height: 20px;
}

.task-search {
  width: 328px;
  display: flex;
  align-items: center;
  gap: 12px;
  padding-left: 12px;
  background: #f2f2f2;
  border: 1px solid #c9cccd;
  color: #333;
  --w: 1.4;
}

.task-search svg {
  width: 20px;
  height: 20px;
}

.task-search input {
  flex: 1;
}

.task-search input::placeholder {
  color: #4a4a4a;
}

.apps {
  display: flex;
  gap: 10px;
  padding-left: 8px;
}

.apps button {
  display: flex;
  align-items: center;
  justify-content: center;
  width: 46px;
  border-bottom: 2px solid transparent;
}

.apps svg {
  width: 28px;
  height: 28px;
}

.apps .running {
  border-color: #eda3aa;
}

.apps .active {
  width: 54px;
  margin: 0 -4px;
  background: #4e5c60;
}

.apps .opera {
  background: #a01f27;
  border-color: #f00a0a;
}

.ps {
  width: 26px;
  height: 24px;
  border: 2px solid #6c9ddb;
  background: #0a0a4e;
  color: #a9d2ff;
  font-size: 13px;
  font-weight: bold;
  line-height: 19px;
}

.tray {
  margin-left: auto;
  display: flex;
  align-items: center;
  padding-right: 4px;
}

.weather {
  position: relative;
  display: flex;
  align-items: center;
  gap: 9px;
}

.weather svg {
  width: 28px;
  height: 28px;
}

.badge {
  position: absolute;
  top: -1px;
  left: 14px;
  width: 14px;
  height: 14px;
  border-radius: 50%;
  background: #c42b1c;
  font-size: 10px;
  line-height: 14px;
}

.tray-icons {
  display: flex;
  gap: 9px;
  margin-left: 26px;
}

.tray-icons svg {
  width: 18px;
  height: 18px;
}

.clock {
  display: flex;
  flex-direction: column;
  align-items: center;
  width: 90px;
  font-size: 13px;
  line-height: 20px;
}

.notify {
  width: 51px;
  height: 45px;
  padding-right: 16px;
  border-right: 1px solid #6d777b;
  line-height: 0;
}

.notify svg {
  width: 20px;
  height: 20px;
}
```
